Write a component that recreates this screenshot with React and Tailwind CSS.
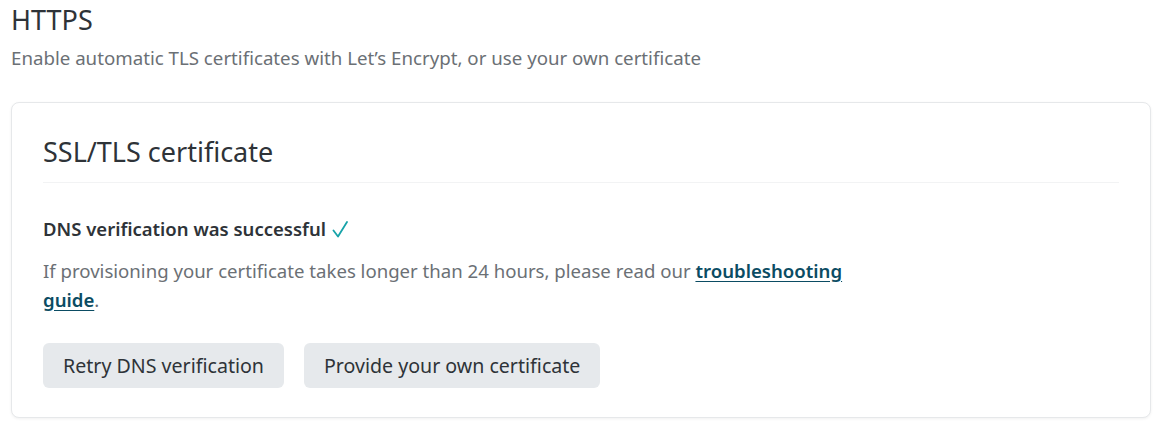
import React from "react";

const App = () => {
  return (
    <div className="min-h-screen bg-white pl-[11px] pr-[5px] pt-[2px] text-[#2e3338]" style={{ fontFamily: '"Noto Sans", "Open Sans", sans-serif' }}>
      <h1 className="text-[27px] leading-[36px]">HTTPS</h1>
      <p className="mt-[8px] text-[18.7px] leading-[24px] text-[#6b7075]">
        Enable automatic TLS certificates with Let’s Encrypt, or use your own certificate
      </p>

      <div className="mt-[32px] rounded-[8px] border border-[#e6e8ea] bg-white px-[31px] pt-[31px] pb-[29px] shadow-[0_1px_3px_rgba(0,0,0,0.06)]">
        <h2 className="border-b border-[#f2f3f4] pb-[12px] text-[27px] leading-[36px]">SSL/TLS certificate</h2>

        <div className="mt-[32px] flex items-center text-[18.5px] font-semibold leading-[28px]">
          <span>DNS verification was successful</span>
          <svg className="ml-[6px]" width="16" height="18" viewBox="0 0 16 18" fill="none">
            <path d="M1.5 10.5 L6 16.5 L15 2" stroke="#17a3a9" strokeWidth="1.8" strokeLinecap="round" strokeLinejoin="round" />
          </svg>
        </div>
        <p className="mt-[13px] max-w-[830px] text-[18.6px] leading-[29px] text-[#6b7075]">
          If provisioning your certificate takes longer than 24 hours, please read our{" "}
          <a href="#" className="font-semibold text-[#0b4c63] underline underline-offset-[3px]">
            troubleshooting guide
          </a>
          .
        </p>

        <div className="mt-[29px] flex gap-[20px]">
          <button className="h-[45px] rounded-[6px] bg-[#e6e9ec] px-[20px] text-[19.6px] text-[#2e3338]">
            Retry DNS verification
          </button>
          <button className="h-[45px] rounded-[6px] bg-[#e6e9ec] px-[20px] text-[19.6px] text-[#2e3338]">
            Provide your own certificate
          </button>
        </div>
      </div>
    </div>
  );
};

export default App;
